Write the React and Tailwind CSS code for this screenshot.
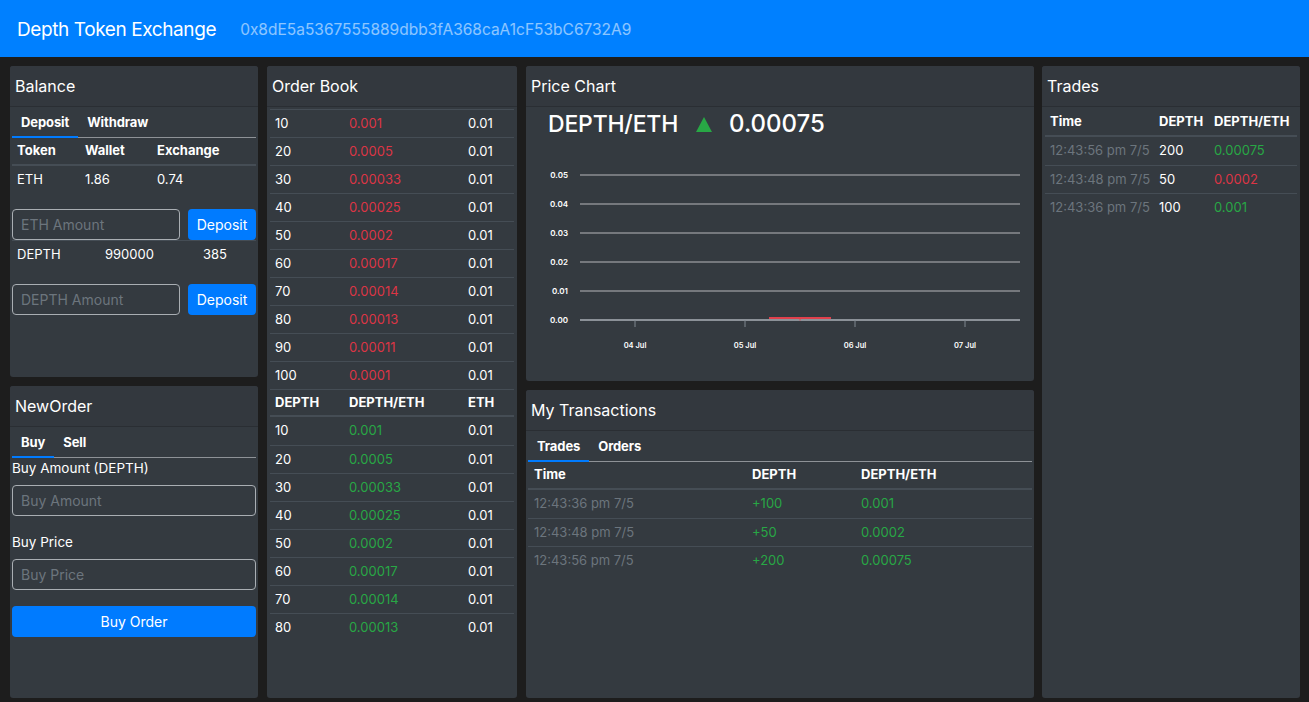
import React from "react";

const sell = [
  [10, "0.001"], [20, "0.0005"], [30, "0.00033"], [40, "0.00025"], [50, "0.0002"],
  [60, "0.00017"], [70, "0.00014"], [80, "0.00013"], [90, "0.00011"], [100, "0.0001"],
];
const buy = sell.slice(0, 8);

function Card({ title, className = "", children }) {
  return (
    <div className={`bg-[#343a40] rounded-[3px] flex flex-col overflow-hidden ${className}`}>
      <div className="h-[41px] shrink-0 flex items-center px-[5px] text-[16px] text-white bg-[#33383e] border-b border-[#2a2e33]">
        {title}
      </div>
      {children}
    </div>
  );
}

function Tabs({ items, className = "" }) {
  return (
    <div className={`h-[31px] shrink-0 flex border-b border-[#8e9297] ${className}`}>
      {items.map((t, i) => (
        <div
          key={t}
          className={`px-[9px] pt-[2px] flex items-center text-[13px] font-bold text-white tracking-[-0.1px] ${
            i === 0 ? "border-b-2 border-[#007bff] -mb-px" : ""
          }`}
        >
          {t}
        </div>
      ))}
    </div>
  );
}

function Input({ placeholder, className = "" }) {
  return (
    <div
      className={`h-[31px] rounded-[4px] border border-[#a9aeb3] flex items-center pl-[8px] text-[14px] text-[#6c757d] ${className}`}
    >
      {placeholder}
    </div>
  );
}

function Btn({ children, className = "" }) {
  return (
    <div
      className={`h-[31px] rounded-[4px] bg-[#007bff] flex items-center justify-center text-[14px] text-white ${className}`}
    >
      {children}
    </div>
  );
}

function Chart() {
  const ys = [
    ["0.05", 34], ["0.04", 63], ["0.03", 92], ["0.02", 121], ["0.01", 150], ["0.00", 179],
  ];
  const xs = [["04 Jul", 109], ["05 Jul", 219], ["06 Jul", 329], ["07 Jul", 439]];
  return (
    <svg width="508" height="240" viewBox="0 0 508 240" className="block">
      {ys.map(([l, y]) => (
        <g key={l}>
          <line x1="54" x2="494" y1={y} y2={y} stroke={l === "0.00" ? "#a9afb6" : "#8b8e92"} strokeWidth="1.3" />
          <text x="42" y={y + 3} textAnchor="end" fontSize="8" fontWeight="600" fill="#ffffff" fontFamily="Inter, sans-serif">
            {l}
          </text>
        </g>
      ))}
      {xs.map(([l, x]) => (
        <g key={l}>
          <line x1={x} x2={x} y1="179" y2="186" stroke="#7f878f" strokeWidth="1" />
          <text x={x} y="206.5" textAnchor="middle" fontSize="7.5" fontWeight="600" fill="#ffffff" fontFamily="Inter, sans-serif">
            {l}
          </text>
        </g>
      ))}
      <line x1="243" x2="305" y1="177" y2="177" stroke="#e0404c" strokeWidth="2" />
      <line x1="274" x2="274" y1="177" y2="179.5" stroke="#e0404c" strokeWidth="1" />
    </svg>
  );
}

export default function App() {
  return (
    <div className="w-[1309px] h-[702px] bg-[#1d1d1d] overflow-hidden font-[Inter,sans-serif] flex flex-col">
      <div className="h-[57px] shrink-0 bg-[#0080ff] flex items-center pl-[17px] pt-[3px]">
        <span className="text-[19px] text-white tracking-[-0.4px]">Depth Token Exchange</span>
        <span className="ml-[24px] text-[15.5px] text-white/55">0x8dE5a5367555889dbb3fA368caA1cF53bC6732A9</span>
      </div>

      <div className="flex-1 flex pt-[9px] pb-[4px] pl-[10px]">
        {/* Column 1 */}
        <div className="w-[248px] flex flex-col gap-[9px]">
          <Card title="Balance" className="h-[311px]">
            <div className="px-[2px] flex flex-col text-[13px] text-white">
              <Tabs items={["Deposit", "Withdraw"]} />
              <div className="h-[28px] grid grid-cols-[68px_72px_1fr] items-center font-bold border-b-2 border-[#454d55]">
                <div className="pl-[5px]">Token</div>
                <div className="pl-[5px]">Wallet</div>
                <div className="pl-[5px]">Exchange</div>
              </div>
              <div className="h-[28px] grid grid-cols-[68px_72px_1fr] items-center">
                <div className="pl-[5px]">ETH</div>
                <div className="pl-[5px]">1.86</div>
                <div className="pl-[5px]">0.74</div>
              </div>
              <div className="mt-[15px] flex gap-[8px]">
                <Input placeholder="ETH Amount" className="w-[168px]" />
                <Btn className="flex-1">Deposit</Btn>
              </div>
              <div className="h-[28px] grid grid-cols-[88px_98px_1fr] items-center border-t border-[#454d55]">
                <div className="pl-[5px]">DEPTH</div>
                <div className="pl-[5px]">990000</div>
                <div className="pl-[5px]">385</div>
              </div>
              <div className="mt-[16px] flex gap-[8px]">
                <Input placeholder="DEPTH Amount" className="w-[168px]" />
                <Btn className="flex-1">Deposit</Btn>
              </div>
            </div>
          </Card>
          <Card title="NewOrder" className="flex-1">
            <div className="px-[2px] flex flex-col text-white">
              <Tabs items={["Buy", "Sell"]} />
              <div className="h-[20px] flex items-center text-[13.5px]">Buy Amount (DEPTH)</div>
              <Input placeholder="Buy Amount" className="mt-[7px] h-[30px]" />
              <div className="mt-[16px] h-[20px] flex items-center text-[13.5px]">Buy Price</div>
              <Input placeholder="Buy Price" className="mt-[7px] h-[30px]" />
              <Btn className="mt-[16px]">Buy Order</Btn>
            </div>
          </Card>
        </div>

        {/* Column 2 */}
        <Card title="Order Book" className="ml-[9px] w-[250px]">
          <div className="px-[3px] mt-[2px] flex flex-col text-[13px] text-white">
            {sell.map(([a, p]) => (
              <div key={"s" + a} className="h-[28px] grid grid-cols-[74px_119px_1fr] items-center border-t border-[#454d55]">
                <div className="pl-[5px]">{a}</div>
                <div className="pl-[5px] text-[#dc3545]">{p}</div>
                <div className="pl-[5px]">0.01</div>
              </div>
            ))}
            <div className="h-[28px] grid grid-cols-[74px_119px_1fr] items-center border-t border-b-2 border-[#454d55] font-bold">
              <div className="pl-[5px]">DEPTH</div>
              <div className="pl-[5px]">DEPTH/ETH</div>
              <div className="pl-[5px]">ETH</div>
            </div>
            {buy.map(([a, p], i) => (
              <div
                key={"b" + a}
                className={`h-[28px] grid grid-cols-[74px_119px_1fr] items-center ${i > 0 ? "border-t border-[#454d55]" : ""}`}
              >
                <div className="pl-[5px]">{a}</div>
                <div className="pl-[5px] text-[#28a745]">{p}</div>
                <div className="pl-[5px]">0.01</div>
              </div>
            ))}
          </div>
        </Card>

        {/* Column 3 */}
        <div className="ml-[9px] w-[508px] flex flex-col gap-[9px]">
          <Card title="Price Chart" className="h-[315px]">
            <div className="h-[34px] shrink-0 flex items-center pl-[22px] font-medium text-white">
              <span className="text-[23px] tracking-[-0.2px]">DEPTH/ETH</span>
              <svg width="16" height="15" viewBox="0 0 16 15" className="ml-[18px]">
                <polygon points="8,0 16,15 0,15" fill="#28a745" />
              </svg>
              <span className="ml-[17px] text-[24px]">0.00075</span>
            </div>
            <Chart />
          </Card>
          <Card title="My Transactions" className="flex-1">
            <div className="px-[2px] flex flex-col text-[13px]">
              <Tabs items={["Trades", "Orders"]} />
              <div className="h-[28px] grid grid-cols-[218px_109px_1fr] items-center font-bold text-white border-b-2 border-[#454d55]">
                <div className="pl-[6px]">Time</div>
                <div className="pl-[6px]">DEPTH</div>
                <div className="pl-[6px]">DEPTH/ETH</div>
              </div>
              {[
                ["12:43:36 pm 7/5", "+100", "0.001"],
                ["12:43:48 pm 7/5", "+50", "0.0002"],
                ["12:43:56 pm 7/5", "+200", "0.00075"],
              ].map(([t, a, p], i) => (
                <div
                  key={t}
                  className={`h-[28px] grid grid-cols-[218px_109px_1fr] items-center ${i > 0 ? "border-t border-[#454d55]" : ""}`}
                >
                  <div className="pl-[6px] text-[#6c757d]">{t}</div>
                  <div className="pl-[6px] text-[#28a745]">{a}</div>
                  <div className="pl-[6px] text-[#28a745]">{p}</div>
                </div>
              ))}
            </div>
          </Card>
        </div>

        {/* Column 4 */}
        <Card title="Trades" className="ml-[8px] w-[258px]">
          <div className="px-[3px] flex flex-col text-[13px]">
            <div className="h-[30px] pt-[2px] grid grid-cols-[109px_55px_1fr] items-center font-bold text-white border-b-2 border-[#454d55]">
              <div className="pl-[5px]">Time</div>
              <div className="pl-[5px]">DEPTH</div>
              <div className="pl-[5px]">DEPTH/ETH</div>
            </div>
            {[
              ["12:43:56 pm 7/5", "200", "0.00075", "text-[#28a745]"],
              ["12:43:48 pm 7/5", "50", "0.0002", "text-[#dc3545]"],
              ["12:43:36 pm 7/5", "100", "0.001", "text-[#28a745]"],
            ].map(([t, a, p, c], i) => (
              <div
                key={t}
                className={`h-[28px] grid grid-cols-[109px_55px_1fr] items-center ${i > 0 ? "border-t border-[#454d55]" : ""}`}
              >
                <div className="pl-[5px] text-[#6c757d] whitespace-nowrap">{t}</div>
                <div className="pl-[5px] text-white">{a}</div>
                <div className={`pl-[5px] ${c}`}>{p}</div>
              </div>
            ))}
          </div>
        </Card>
      </div>
    </div>
  );
}
